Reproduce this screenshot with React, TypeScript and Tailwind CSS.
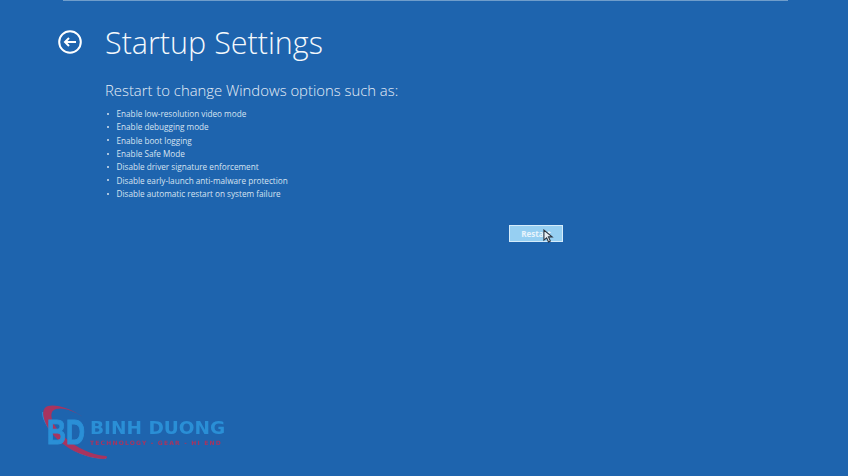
const options = [
  "Enable low-resolution video mode",
  "Enable debugging mode",
  "Enable boot logging",
  "Enable Safe Mode",
  "Disable driver signature enforcement",
  "Disable early-launch anti-malware protection",
  "Disable automatic restart on system failure",
];

function BackIcon() {
  return (
    <svg width="24" height="24" viewBox="0 0 24 24" fill="none" stroke="white" strokeWidth="2">
      <circle cx="12" cy="12" r="10.8" />
      <path d="M18 12H7M11 8l-4 4 4 4" />
    </svg>
  );
}

function Cursor() {
  return (
    <svg className="absolute left-[33px] top-[3px]" width="11" height="14" viewBox="0 0 12 15">
      <path d="M1 1v11l3-2.500 2 4.500 2-1-2-4.500h4z" fill="#e6ecf2" stroke="#2b3440" strokeWidth="1.200" />
    </svg>
  );
}

// watermark sitting over the bottom left corner
function Logo() {
  return (
    <div className="absolute left-[42px] top-[404px] h-[60px] w-[190px] blur-[0.4px]">
      <svg className="absolute left-0 top-0" width="70" height="62" viewBox="0 0 70 62" fill="none">
        <path d="M1 8C-1 22 30 55 64 54" stroke="#2a8fd6" strokeWidth="1.500" />
        <path d="M41 13C28 4 14 0 6 2C-1 4 0 14 6 24C16 40 38 54 62 55C65 55 66 53 64 52C42 50 22 36 13 22C8 13 8 7 14 5C22 3 32 7 41 13Z" fill="#a8345f" />
      </svg>
      <div className="relative flex items-start pl-[5px] pt-[13px]">
        <span className="w-[43px] origin-left scale-x-75 font-['Liberation_Sans',sans-serif] text-[35px] font-bold leading-[30px] text-[#2a8fd6] [-webkit-text-stroke:1px_#2a8fd6]">
          BD
        </span>
        <div className="flex flex-col font-['DejaVu_Sans',sans-serif] font-bold">
          <span className="text-[18.500px] leading-[21px] text-[#2a8fd6]">BINH DUONG</span>
          <span className="mt-[1px] text-[6px] leading-[8px] tracking-[1.200px] text-[#a8345f]">
            TECHNOLOGY - GEAR - HI END
          </span>
        </div>
      </div>
    </div>
  );
}

export default function App() {
  return (
    <div className="relative h-[476px] w-[848px] overflow-hidden bg-[#1e64ae] font-['Open_Sans',sans-serif] text-white">
      <div className="ml-[63px] h-px w-[725px] bg-[#6f9dcb]" />
      <div className="ml-[58px] mt-[21px] flex items-center gap-[23px]">
        <BackIcon />
        <h1 className="text-[30.500px] font-light leading-[40px] text-[#f4f8fc]">Startup Settings</h1>
      </div>
      <div className="ml-[105px] mt-[18px]">
        <p className="text-[14.850px] font-light leading-[20px] text-[#e6eef7]">
          Restart to change Windows options such as:
        </p>
        <ul className="mt-[7px] flex flex-col">
          {options.map((option) => (
            <li key={option} className="flex h-[13.330px] items-center text-[8.200px] leading-[13px] text-[#d6e3f1]">
              <span className="ml-[2px] mr-[7.500px] h-[2px] w-[2px] rounded-full bg-[#d6e3f1]" />
              {option}
            </li>
          ))}
        </ul>
        <div className="ml-[404px] mt-[25px]">
          <button className="relative flex h-[17px] w-[54px] items-center justify-center border border-[#d5ecfb] bg-[#96cff2] text-[8px] font-bold text-[#e8f4fc]">
            Restart
            <Cursor />
          </button>
        </div>
      </div>
      <Logo />
    </div>
  );
}
